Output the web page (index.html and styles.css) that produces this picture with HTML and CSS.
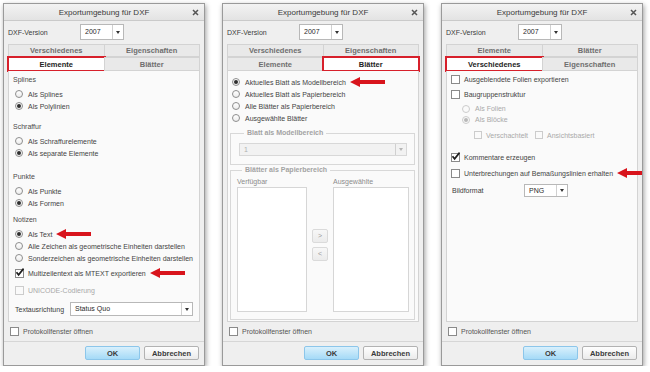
FILE: index.html
```html
<!DOCTYPE html>
<html lang="de"><head>
    <meta charset="UTF-8">
    <title>Exportumgebung für DXF</title>
    <link rel="stylesheet" href="styles.css">
</head>
<body>
<div class="screen">

    <!-- Tab: Elemente -->
    <div class="dialog">
        <div class="titlebar">
            <span></span>
            <span class="title">Exportumgebung für DXF</span>
            <svg class="close" width="7" height="7" viewBox="0 0 7 7"><path d="M1 1L6 6M6 1L1 6"/></svg>
        </div>
        <div class="dlg-body">
            <div class="field-row top">
                <span class="field-label">DXF-Version</span>
                <div class="select version"><span class="select-text">2007</span><span class="select-btn"><i class="caret"></i></span></div>
            </div>
            <div class="tabs">
                <div class="tab-row back"><div class="tab">Verschiedenes</div><div class="tab">Eigenschaften</div></div>
                <div class="tab-row front"><div class="tab active">Elemente</div><div class="tab">Blätter</div></div>
            </div>
            <div class="panel elements">
                <div class="group">
                    <div class="group-title">Splines</div>
                    <div class="opt"><span class="radio"></span>Als Splines</div>
                    <div class="opt"><span class="radio on"></span>Als Polylinien</div>
                </div>
                <div class="group">
                    <div class="group-title">Schraffur</div>
                    <div class="opt"><span class="radio"></span>Als Schraffurelemente</div>
                    <div class="opt"><span class="radio on"></span>Als separate Elemente</div>
                </div>
                <div class="group wide">
                    <div class="group-title">Punkte</div>
                    <div class="opt"><span class="radio"></span>Als Punkte</div>
                    <div class="opt"><span class="radio on"></span>Als Formen</div>
                </div>
                <div class="group narrow">
                    <div class="group-title">Notizen</div>
                    <div class="opt"><span class="radio on"></span>Als Text<svg class="pointer" width="35" height="10" viewBox="0 0 35 10"><polygon points="0,5 10,0 10,3 35,3 35,7 10,7 10,10"/></svg></div>
                    <div class="opt"><span class="radio"></span>Alle Zeichen als geometrische Einheiten darstellen</div>
                    <div class="opt"><span class="radio"></span>Sonderzeichen als geometrische Einheiten darstellen</div>
                    <div class="opt mt3"><span class="check on"><svg width="9" height="9" viewBox="0 0 9 9"><path d="M1.5 4.2L3.6 6.8L8.6 0.6"/></svg></span>Multizeilentext als MTEXT exportieren<svg class="pointer" width="35" height="10" viewBox="0 0 35 10"><polygon points="0,5 10,0 10,3 35,3 35,7 10,7 10,10"/></svg></div>
                    <div class="opt mt5 disabled"><span class="check"></span>UNICODE-Codierung</div>
                </div>
                <div class="field-row align-row">
                    <span class="field-label short">Textausrichtung</span>
                    <div class="select grow"><span class="select-text">Status Quo</span><span class="select-btn"><i class="caret"></i></span></div>
                </div>
            </div>
            <div class="log-row"><span class="check"></span>Protokollfenster öffnen</div>
        </div>
        <div class="buttons"><button class="btn ok">OK</button><button class="btn">Abbrechen</button></div>
    </div>

    <!-- Tab: Blätter -->
    <div class="dialog">
        <div class="titlebar">
            <span></span>
            <span class="title">Exportumgebung für DXF</span>
            <svg class="close" width="7" height="7" viewBox="0 0 7 7"><path d="M1 1L6 6M6 1L1 6"/></svg>
        </div>
        <div class="dlg-body">
            <div class="field-row top">
                <span class="field-label">DXF-Version</span>
                <div class="select version"><span class="select-text">2007</span><span class="select-btn"><i class="caret"></i></span></div>
            </div>
            <div class="tabs">
                <div class="tab-row back"><div class="tab">Verschiedenes</div><div class="tab">Eigenschaften</div></div>
                <div class="tab-row front"><div class="tab">Elemente</div><div class="tab active">Blätter</div></div>
            </div>
            <div class="panel sheets">
                <div class="opt"><span class="radio on"></span>Aktuelles Blatt als Modellbereich<svg class="pointer" width="35" height="10" viewBox="0 0 35 10"><polygon points="0,5 10,0 10,3 35,3 35,7 10,7 10,10"/></svg></div>
                <div class="opt"><span class="radio"></span>Aktuelles Blatt als Papierbereich</div>
                <div class="opt"><span class="radio"></span>Alle Blätter als Papierbereich</div>
                <div class="opt"><span class="radio"></span>Ausgewählte Blätter</div>

                <fieldset class="frame model">
                    <legend>Blatt als Modellbereich</legend>
                    <div class="select grow off"><span class="select-text">1</span><span class="select-btn"><i class="caret"></i></span></div>
                </fieldset>

                <fieldset class="frame papers">
                    <legend>Blätter als Papierbereich</legend>
                    <div class="list-label">Verfügbar</div>
                    <div></div>
                    <div class="list-label">Ausgewählte</div>
                    <div class="listbox"></div>
                    <div class="move-btns">
                        <button class="mini">&gt;</button>
                        <button class="mini">&lt;</button>
                    </div>
                    <div class="listbox"></div>
                </fieldset>
            </div>
            <div class="log-row"><span class="check"></span>Protokollfenster öffnen</div>
        </div>
        <div class="buttons"><button class="btn ok">OK</button><button class="btn">Abbrechen</button></div>
    </div>

    <!-- Tab: Verschiedenes -->
    <div class="dialog">
        <div class="titlebar">
            <span></span>
            <span class="title">Exportumgebung für DXF</span>
            <svg class="close" width="7" height="7" viewBox="0 0 7 7"><path d="M1 1L6 6M6 1L1 6"/></svg>
        </div>
        <div class="dlg-body">
            <div class="field-row top">
                <span class="field-label">DXF-Version</span>
                <div class="select version"><span class="select-text">2007</span><span class="select-btn"><i class="caret"></i></span></div>
            </div>
            <div class="tabs">
                <div class="tab-row back"><div class="tab">Elemente</div><div class="tab">Blätter</div></div>
                <div class="tab-row front"><div class="tab active">Verschiedenes</div><div class="tab">Eigenschaften</div></div>
            </div>
            <div class="panel misc">
                <div class="opt"><span class="check"></span>Ausgeblendete Folien exportieren</div>
                <div class="opt mt3"><span class="check"></span>Baugruppenstruktur</div>
                <div class="opt sub mt3 disabled"><span class="radio"></span>Als Folien</div>
                <div class="opt sub disabled"><span class="radio on"></span>Als Blöcke</div>
                <div class="opt subsub disabled"><span class="check"></span>Verschachtelt<span class="check spaced"></span>Ansichtsbasiert</div>
                <div class="opt mt10"><span class="check on"><svg width="9" height="9" viewBox="0 0 9 9"><path d="M1.5 4.2L3.6 6.8L8.6 0.6"/></svg></span>Kommentare erzeugen</div>
                <div class="opt mt4"><span class="check"></span>Unterbrechungen auf Bemaßungslinien erhalten<svg class="pointer" width="25" height="10" viewBox="0 0 25 10"><polygon points="0,5 10,0 10,3 25,3 25,7 10,7 10,10"/></svg></div>
                <div class="field-row image-row">
                    <span class="field-label">Bildformat</span>
                    <div class="select version"><span class="select-text">PNG</span><span class="select-btn"><i class="caret"></i></span></div>
                </div>
            </div>
            <div class="log-row"><span class="check"></span>Protokollfenster öffnen</div>
        </div>
        <div class="buttons"><button class="btn ok">OK</button><button class="btn">Abbrechen</button></div>
    </div>

</div>
</body></html>
```

FILE: styles.css
```css
/* export dialog, three tab states side by side */
* {
    box-sizing: border-box;
}

body {
    margin: 0;
    background-color: #ffffff;
    font-family: "Liberation Sans", Arial, sans-serif;
    font-size: 7px;
    color: #444444;
}

.screen {
    display: flex;
    gap: 17px;
    padding: 3px 0 0 3px;
}

.dialog {
    width: 202px;
    height: 363px;
    display: flex;
    flex-direction: column;
    background-color: #efefef;
    border: 1px solid #9a9a9a;
    box-shadow: 1px 2px 5px rgba(0, 0, 0, 0.38);
}

/* title bar */
.titlebar {
    height: 17px;
    display: grid;
    grid-template-columns: 1fr auto 1fr;
    align-items: center;
    padding: 0 5px;
    background: linear-gradient(#f3f3f3, #e3e3e3);
    border-bottom: 1px solid #cacaca;
}

.title {
    font-size: 8px;
    color: #3a3a3a;
}

.close {
    justify-self: end;
}

.close path {
    stroke: #555555;
    stroke-width: 1.5;
}

.dlg-body {
    flex: 1;
    display: flex;
    flex-direction: column;
    padding: 0 4px;
}

/* label + dropdown rows */
.field-row {
    display: flex;
    align-items: center;
}

.field-row.top {
    margin-top: 3px;
    height: 16px;
}

.field-label {
    width: 72px;
    flex-shrink: 0;
    color: #3c3c3c;
}

.field-label.short {
    width: 55px;
}

.select {
    display: flex;
    height: 16px;
    background-color: #ffffff;
    border: 1px solid #b8b8b8;
    color: #2a2a2a;
}

.select.version {
    width: 44px;
}

.select.grow {
    flex: 1;
}

.select-text {
    flex: 1;
    padding-left: 4px;
    line-height: 14px;
}

.select-btn {
    width: 11px;
    display: flex;
    align-items: center;
    justify-content: center;
    border-left: 1px solid #d0d0d0;
}

.caret {
    width: 0;
    height: 0;
    border-left: 2.5px solid transparent;
    border-right: 2.5px solid transparent;
    border-top: 3px solid #333333;
}

.select.off {
    background-color: #f2f2f2;
    border-color: #d8d8d8;
    color: #b0b0b0;
    height: 13px;
}

.select.off .select-text {
    line-height: 11px;
}

.select.off .caret {
    border-top-color: #b5b5b5;
}

/* tabs */
.tabs {
    margin-top: 4px;
}

.tab-row {
    display: flex;
}

.tab-row.back {
    height: 13px;
}

.tab-row.front {
    height: 14px;
}

.tab {
    flex: 1;
    display: flex;
    align-items: center;
    justify-content: center;
    font-size: 7.5px;
    font-weight: bold;
    color: #6e6e6e;
    background-color: #e9e9e9;
    border: 1px solid #d3d3d3;
    margin-left: -1px;
}

.tab:first-child {
    margin-left: 0;
}

.tab.active {
    background-color: #ffffff;
    color: #222222;
    outline: 2px solid #d7202b;
    outline-offset: -1px;
    border-bottom-color: #ffffff;
}

/* tab page */
.panel {
    flex: 1;
    display: flex;
    flex-direction: column;
    background-color: #fafafa;
    border: 1px solid #d3d3d3;
    border-top: none;
}

.panel.elements {
    padding: 3px 4px 0;
}

.panel.sheets {
    padding: 5px 3px 0 2px;
}

.panel.misc {
    padding: 2px 4px 0;
}

.group + .group {
    margin-top: 9px;
}

.group.wide {
    margin-top: 12px;
}

.group.narrow {
    margin-top: 5px;
}

.group-title {
    height: 12px;
    line-height: 12px;
    margin-bottom: 2px;
    color: #4a4a4a;
}

.opt {
    display: flex;
    align-items: center;
    height: 12px;
    white-space: nowrap;
}

.mt3 { margin-top: 3px; }
.mt4 { margin-top: 4px; }
.mt5 { margin-top: 5px; }
.mt10 { margin-top: 10px; }

.opt.disabled {
    color: #a9a9a9;
}

.radio {
    width: 8px;
    height: 8px;
    flex-shrink: 0;
    margin: 0 5px 0 2px;
    border-radius: 50%;
    border: 1px solid #8e8e8e;
    background: linear-gradient(#ffffff, #ececec);
    display: flex;
    align-items: center;
    justify-content: center;
}

.radio.on::after {
    content: "";
    width: 4px;
    height: 4px;
    border-radius: 50%;
    background-color: #2e2e2e;
}

.check {
    width: 9px;
    height: 9px;
    flex-shrink: 0;
    margin-right: 4px;
    border: 1px solid #8a8a8a;
    background-color: #ffffff;
    position: relative;
}

.check svg {
    position: absolute;
    left: -1px;
    top: -2px;
}

.check path {
    fill: none;
    stroke: #1e1e1e;
    stroke-width: 1.7;
}

.elements .check {
    margin-left: 2px;
}

.disabled .radio,
.disabled .check {
    border-color: #cccccc;
    background: #fafafa;
}

.disabled .radio.on::after {
    background-color: #b8b8b8;
}

.pointer {
    flex-shrink: 0;
    margin-left: 4px;
}

.pointer polygon {
    fill: #d8141c;
}

.align-row {
    margin: 6px 2px 0;
}

.align-row .select {
    height: 14px;
}

.align-row .select-text {
    line-height: 12px;
}

/* Verschiedenes page */
.opt.sub {
    height: 11px;
    padding-left: 9px;
}

.opt.sub .radio {
    margin-right: 5px;
}

.opt.subsub {
    margin-top: 4px;
    padding-left: 23px;
}

.subsub .check {
    width: 8px;
    height: 8px;
}

.check.spaced {
    margin-left: 7px;
}

.image-row {
    margin-top: 5px;
    padding-left: 1px;
}

.image-row .select {
    height: 13px;
}

.image-row .select-text {
    line-height: 11px;
}

/* Blätter page */
.panel.sheets > .opt .radio {
    margin-left: 2px;
}

.frame {
    margin: 0;
    min-width: 0;
    border: 1px solid #d8d8d8;
}

.frame legend {
    padding: 0 3px;
    margin-left: 5px;
    line-height: 10px;
    font-weight: bold;
    color: #a3a3a3;
}

.frame.model {
    margin-top: 4px;
    padding: 5px 7px 8px 8px;
    display: flex;
}

.frame.papers {
    flex: 1;
    margin-bottom: 1px;
    padding: 2px 5px 7px 6px;
    display: grid;
    grid-template-columns: 70px 16px 1fr;
    grid-template-rows: 10px 1fr;
    column-gap: 5px;
}

.list-label {
    color: #8c8c8c;
    line-height: 10px;
}

.listbox {
    background-color: #ffffff;
    border: 1px solid #d6d6d6;
}

.move-btns {
    display: flex;
    flex-direction: column;
    justify-content: center;
    gap: 4px;
    padding-bottom: 10px;
}

.mini {
    width: 16px;
    height: 14px;
    padding: 0;
    font-family: inherit;
    font-size: 7px;
    color: #9a9a9a;
    background: linear-gradient(#f7f7f7, #ebebeb);
    border: 1px solid #dadada;
    border-radius: 2px;
}

/* bottom of the dialog */
.log-row {
    height: 19px;
    display: flex;
    align-items: center;
    padding-left: 2px;
    color: #555555;
}

.buttons {
    height: 24px;
    display: flex;
    justify-content: flex-end;
    gap: 4px;
    padding: 4px 5px 0;
    border-top: 1px solid #d6d6d6;
}

.btn {
    width: 55px;
    height: 14px;
    padding: 0;
    font-family: inherit;
    font-size: 7.5px;
    font-weight: bold;
    color: #3a3a3a;
    background: linear-gradient(#fefefe, #ebebeb);
    border: 1px solid #b2b2b2;
    border-radius: 2px;
}

.btn.ok {
    background: linear-gradient(#d9f0fc, #a5daf7);
    border-color: #8cc6ea;
}
```
